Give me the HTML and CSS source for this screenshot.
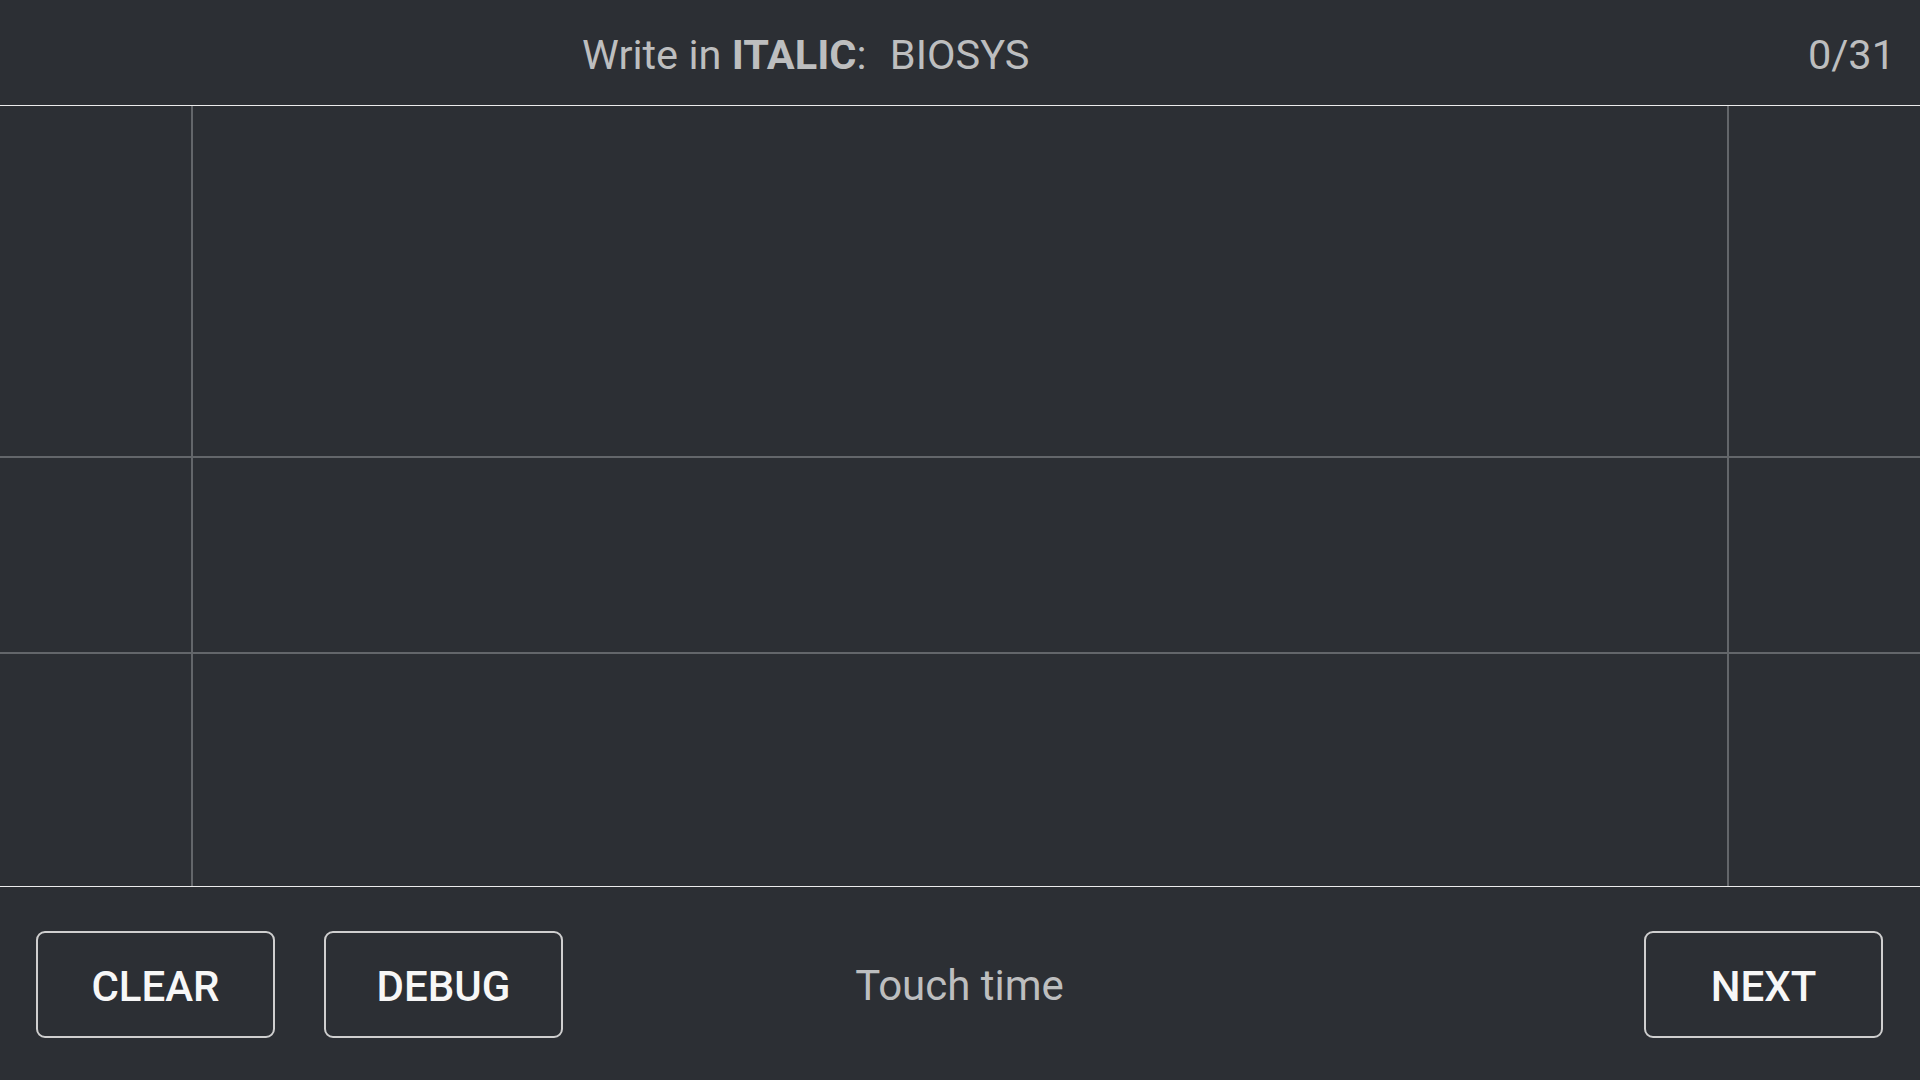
FILE: index.html
```html
<!DOCTYPE html>
<html>
<head>
<meta charset="utf-8">
<link rel="stylesheet" href="styles.css">
</head>
<body>
<div class="app">
  <header class="header">
    <div class="title">Write in <b>ITALIC</b>: <span class="word">BIOSYS</span></div>
    <div class="counter">0/31</div>
  </header>
  <main class="pad">
    <div class="cell"></div><div class="cell"></div><div class="cell"></div>
    <div class="cell"></div><div class="cell"></div><div class="cell"></div>
    <div class="cell"></div><div class="cell"></div><div class="cell"></div>
  </main>
  <footer class="footer">
    <div class="left">
      <button class="btn">CLEAR</button>
      <button class="btn">DEBUG</button>
    </div>
    <div class="status">Touch time</div>
    <div class="right">
      <button class="btn">NEXT</button>
    </div>
  </footer>
</div>
</body>
</html>
```
FILE: styles.css
```css
html, body {
  margin: 0;
  padding: 0;
  background: #2c2f34;
}
body {
  font-family: Roboto, "Liberation Sans", sans-serif;
}
.app {
  width: 1920px;
  height: 1080px;
  display: flex;
  flex-direction: column;
  background: #2c2f34;
}
.header {
  height: 106px;
  box-sizing: border-box;
  flex: none;
  border-bottom: 1px solid #ececec;
  display: flex;
  align-items: center;
  justify-content: space-between;
  padding: 3px 25px 0 582px;
  color: #bdbebf;
  font-size: 41.5px;
}
.title b {
  font-weight: 700;
}
.word {
  margin-left: 13px;
}
.pad {
  flex: none;
  height: 781px;
  box-sizing: border-box;
  display: grid;
  grid-template-columns: 191px 1534px 191px;
  grid-template-rows: 350px 194px 232px;
  gap: 2px;
  background: #63666a;
  border-bottom: 1px solid #ececec;
}
.cell {
  background: #2c2f34;
}
.footer {
  flex: 1;
  display: grid;
  grid-template-columns: 1fr auto 1fr;
  align-items: center;
  padding: 0 37px 0 36px;
}
.left {
  display: flex;
  gap: 49px;
}
.right {
  display: flex;
  justify-content: flex-end;
}
.status {
  color: #bdbebf;
  font-size: 42px;
  padding-top: 3px;
}
.btn {
  width: 239px;
  height: 107px;
  box-sizing: border-box;
  border: 2px solid #cfcfcf;
  border-radius: 9px;
  background: transparent;
  color: #f7f7f7;
  font-family: Roboto, "Liberation Sans", sans-serif;
  font-weight: 500;
  font-size: 42px;
  padding: 4px 0 0 0;
  margin-top: 1px;
}
```
